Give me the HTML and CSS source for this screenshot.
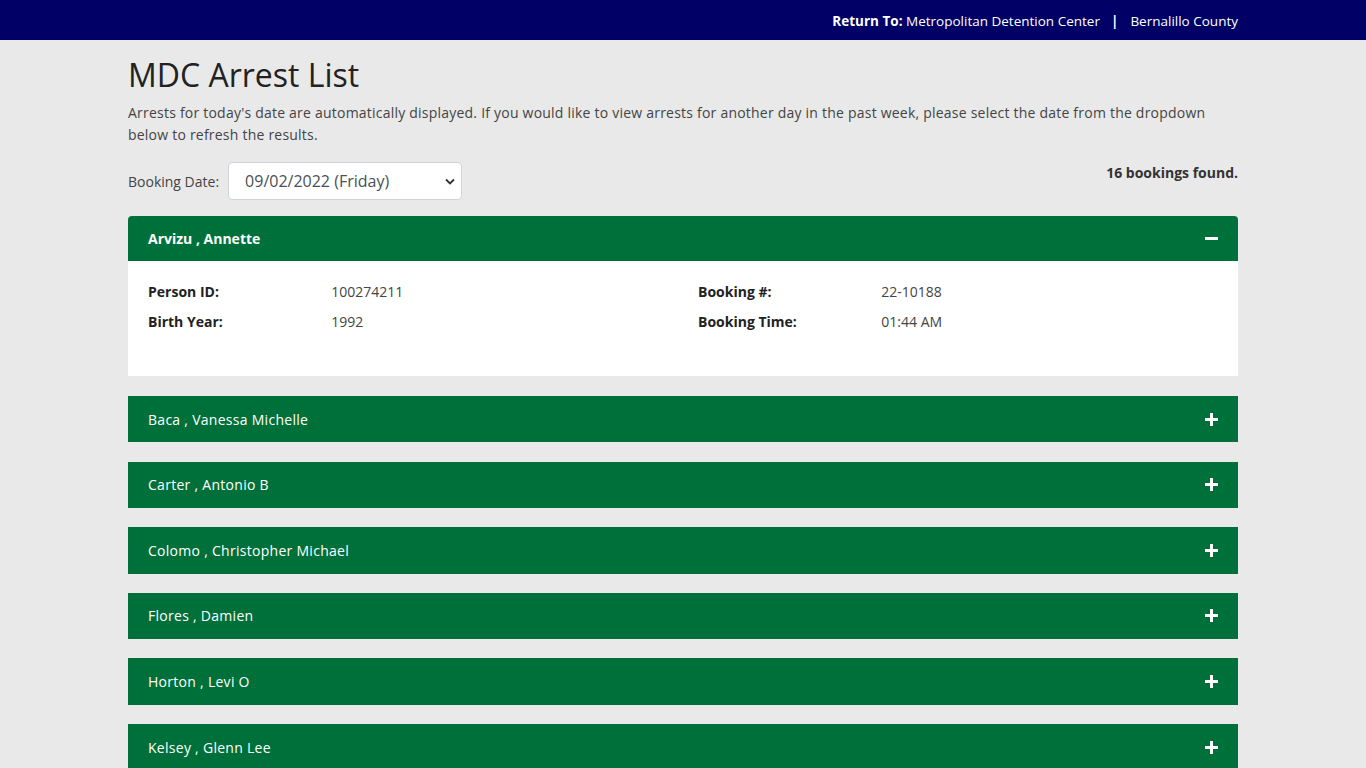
FILE: index.html
```html
<!DOCTYPE html>
<html lang="en">
<head>
    <meta charset="UTF-8">
    <meta name="viewport" content="width=device-width, initial-scale=1.0">
    <title>MDC Arrest List</title>
    <link rel="stylesheet" href="styles.css">
</head>
<body>
    <div class="topbar">
        <div class="container topbar-inner">
            <b>Return To:</b>&nbsp;<a href="#">Metropolitan Detention Center</a>
            <span class="sep">|</span>
            <a href="#">Bernalillo County</a>
        </div>
    </div>

    <div class="container">
        <h1 class="title">MDC Arrest List</h1>
        <p class="intro">Arrests for today's date are automatically displayed. If you would like to view arrests for another day in the past week, please select the date from the dropdown below to refresh the results.</p>

        <div class="filter-row">
            <div class="filter">
                <label for="bookingDate">Booking Date:</label>
                <select id="bookingDate" class="date-select">
                    <option>09/02/2022 (Friday)</option>
                    <option>09/01/2022 (Thursday)</option>
                    <option>08/31/2022 (Wednesday)</option>
                </select>
            </div>
            <div class="count">16 bookings found.</div>
        </div>

        <div class="card open">
            <div class="card-head">
                <span class="name">Arvizu , Annette</span>
                <span class="toggle minus"></span>
            </div>
            <div class="card-body">
                <div class="grid">
                    <div class="col">
                        <div class="field"><span class="label">Person ID:</span><span class="value">100274211</span></div>
                        <div class="field"><span class="label">Birth Year:</span><span class="value">1992</span></div>
                    </div>
                    <div class="col">
                        <div class="field"><span class="label">Booking #:</span><span class="value">22-10188</span></div>
                        <div class="field"><span class="label">Booking Time:</span><span class="value">01:44 AM</span></div>
                    </div>
                </div>
            </div>
        </div>

        <div class="card"><div class="card-head"><span class="name">Baca , Vanessa Michelle</span><span class="toggle plus"></span></div></div>
        <div class="card"><div class="card-head"><span class="name">Carter , Antonio B</span><span class="toggle plus"></span></div></div>
        <div class="card"><div class="card-head"><span class="name">Colomo , Christopher Michael</span><span class="toggle plus"></span></div></div>
        <div class="card"><div class="card-head"><span class="name">Flores , Damien</span><span class="toggle plus"></span></div></div>
        <div class="card"><div class="card-head"><span class="name">Horton , Levi O</span><span class="toggle plus"></span></div></div>
        <div class="card"><div class="card-head"><span class="name">Kelsey , Glenn Lee</span><span class="toggle plus"></span></div></div>
    </div>
</body>
</html>
```

FILE: styles.css
```css
* {
  box-sizing: border-box;
}
body {
  margin: 0;
  background-color: #e9e9e9;
  font-family: "Open Sans", "Liberation Sans", sans-serif;
  font-size: 14px;
  color: #333;
  overflow: hidden;
}
.container {
  max-width: 1140px;
  padding: 0 15px;
  margin: 0 auto;
}
.topbar {
  background-color: #000066;
  color: #fff;
  height: 40px;
  font-size: 13.5px;
}
.topbar-inner {
  display: flex;
  justify-content: flex-end;
  align-items: center;
  height: 40px;
  padding-top: 2px;
}
.topbar a {
  color: #fff;
  text-decoration: none;
}
.topbar .sep {
  font-weight: bold;
  margin: 0 12px 0 11px;
}
h1.title {
  font-size: 32px;
  font-weight: 400;
  line-height: 40px;
  margin: 15px 0 7px;
  color: #222;
}
p.intro {
  margin: 0 0 16px;
  line-height: 22px;
  letter-spacing: 0.22px;
  color: #444;
}
.filter-row {
  display: flex;
  justify-content: space-between;
  align-items: flex-start;
  margin-bottom: 16px;
}
.filter {
  display: flex;
  align-items: center;
}
.filter label {
  color: #444;
  margin-right: 9px;
}
.date-select {
  appearance: none;
  -webkit-appearance: none;
  width: 234px;
  height: 38px;
  padding: 0 30px 0 16px;
  font-family: inherit;
  font-size: 16px;
  color: #495057;
  background-color: #fff;
  background-image: url("data:image/svg+xml,%3Csvg xmlns='http://www.w3.org/2000/svg' width='10' height='7' viewBox='0 0 10 7'%3E%3Cpath d='M1 1.5l4 4 4-4' fill='none' stroke='%23333' stroke-width='1.8'/%3E%3C/svg%3E");
  background-repeat: no-repeat;
  background-position: right 6px center;
  border: 1px solid #ced4da;
  border-radius: 4px;
}
.count {
  font-weight: bold;
  line-height: 21px;
}
.card {
  margin-bottom: 19.2px;
}
.card.open {
  margin-bottom: 20px;
}
.card-head {
  display: flex;
  justify-content: space-between;
  align-items: center;
  background-color: #00703a;
  color: #fff;
  padding: 0 20px;
  height: 46.4px;
  line-height: 21px;
  letter-spacing: 0.28px;
}
.card.open .card-head {
  height: 45px;
  border-radius: 4px 4px 0 0;
  font-weight: bold;
  letter-spacing: 0;
}
.toggle {
  position: relative;
  width: 13px;
  height: 13px;
}
.toggle::before,
.plus::after {
  content: "";
  position: absolute;
  background: #fff;
}
.toggle::before {
  left: 0;
  right: 0;
  top: 5px;
  height: 3px;
}
.plus::after {
  top: 0;
  bottom: 0;
  left: 5px;
  width: 3px;
}
.card-body {
  background: #fff;
  padding: 20px 20px 35px;
}
.grid {
  display: grid;
  grid-template-columns: 1fr 1fr;
  column-gap: 30px;
}
.field {
  display: grid;
  grid-template-columns: 153.3px 1fr;
  column-gap: 30px;
  line-height: 21px;
  margin-bottom: 9px;
}
.label {
  font-weight: bold;
  color: #222;
}
.value {
  color: #444;
}
```
